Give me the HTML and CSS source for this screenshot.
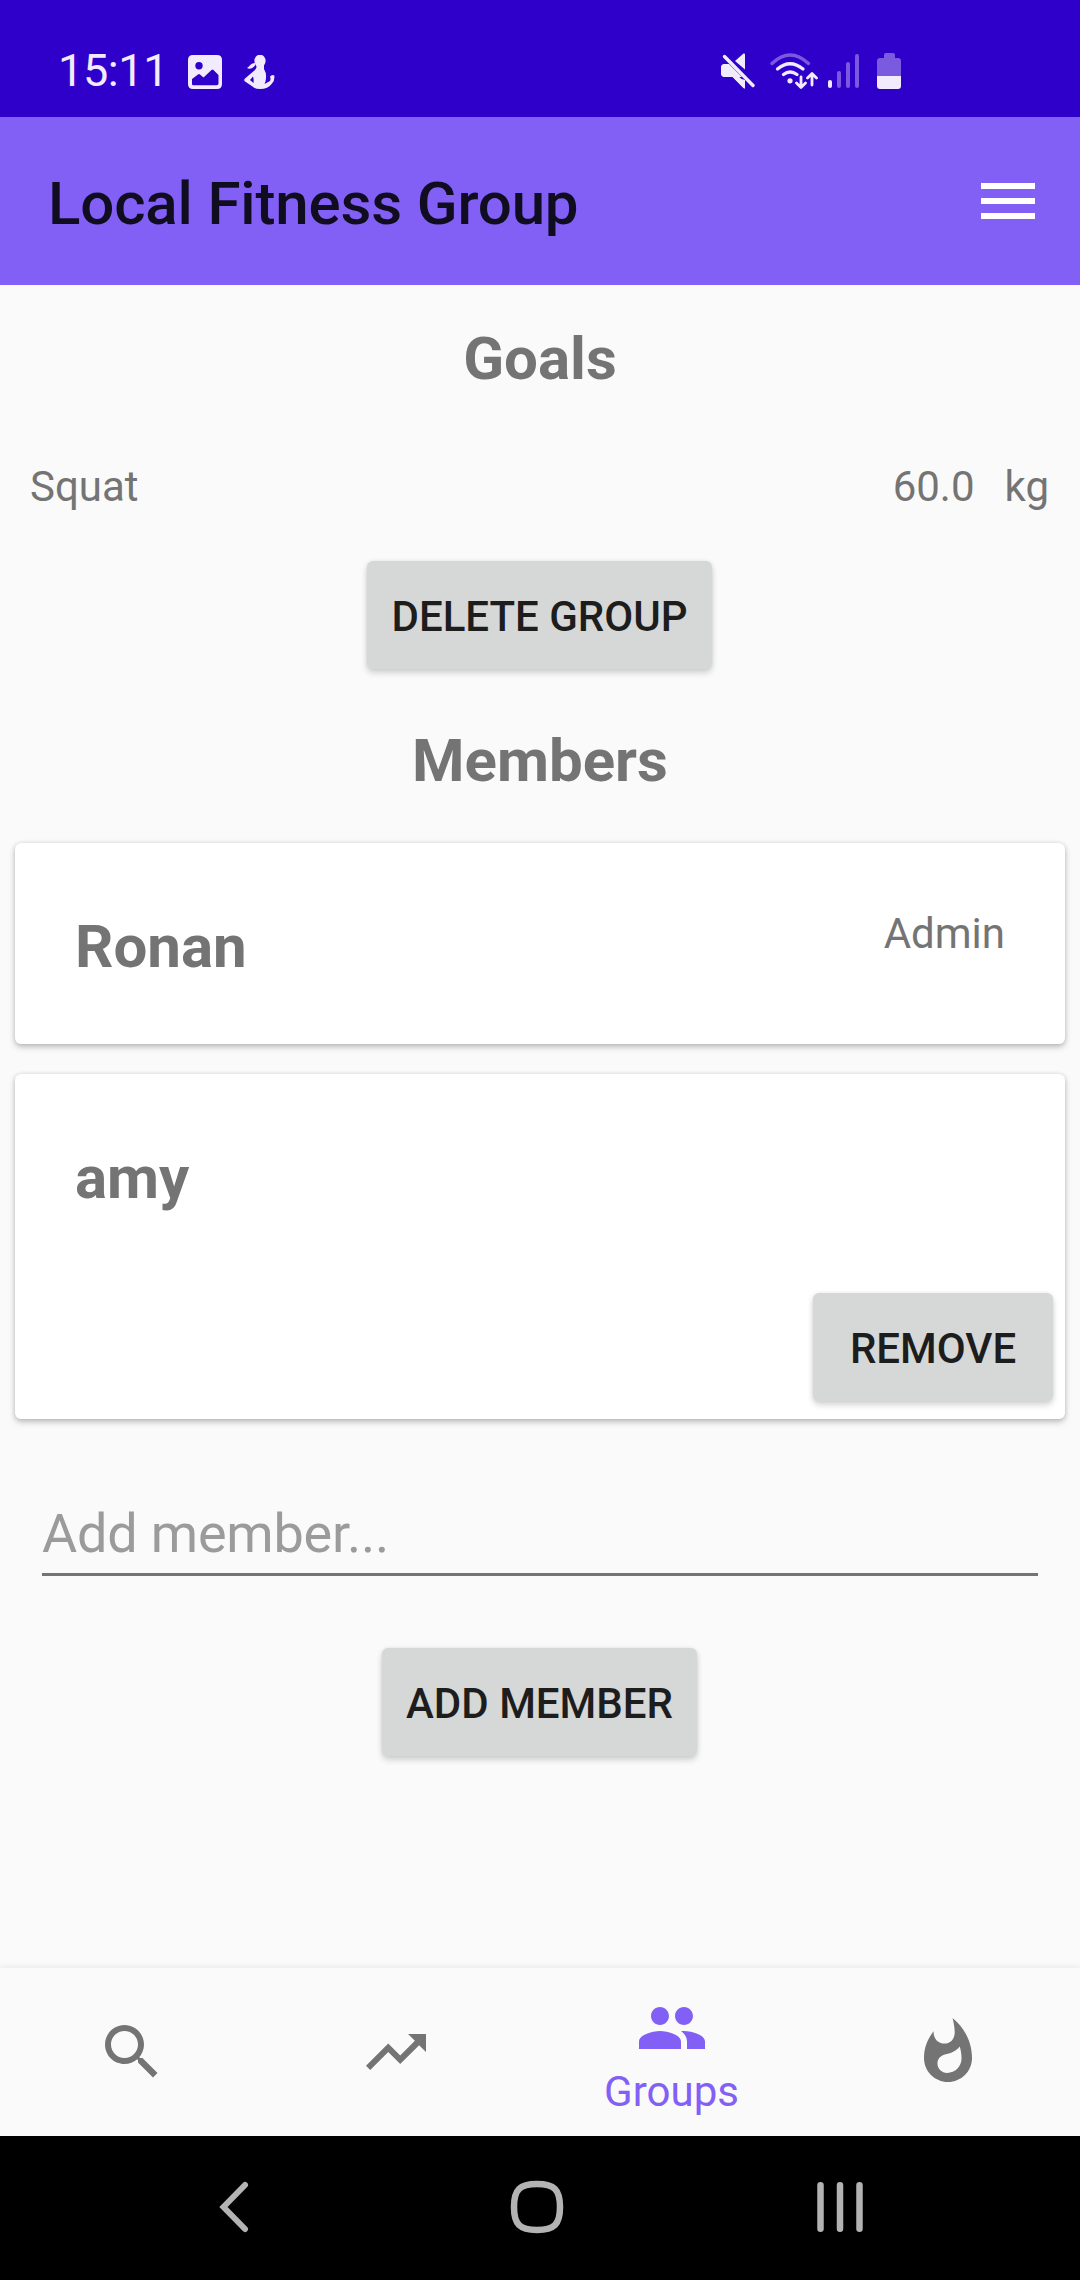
FILE: index.html
```html
<!DOCTYPE html>
<html lang="en">
<head>
<meta charset="utf-8">
<title>Local Fitness Group</title>
<link rel="stylesheet" href="styles.css">
</head>
<body>
<div class="screen">
  <div class="status-bar">
    <span class="clock">15:11</span>
    <svg class="icon-picture" viewBox="0 0 34 34" width="34" height="34"><path fill="#f1ebfd" fill-rule="evenodd" d="M5 0H29Q34 0 34 5V29Q34 34 29 34H5Q0 34 0 29V5Q0 0 5 0ZM11 7A3.7 3.7 0 1 0 11 14.400A3.700 3.700 0 1 0 11 7ZM4 24V29Q4 30.300 5.300 30.300H28.700Q30.500 30.300 30.500 28.500V20L25.500 15Q24.500 14.200 23.500 15L15.500 22.500L12 19.500Q11 18.700 10 19.500Z"/></svg>
    <svg class="icon-person" viewBox="0 0 31 34" width="31" height="34"><g fill="#f1ebfd"><ellipse cx="16" cy="6" rx="5.600" ry="6.300"/><path d="M11 8C7 8 6 11 3 13C6 15 9 13 11.500 10Z"/><path fill-rule="evenodd" d="M12.500 9H20V14Q22.500 18 22 23Q22 26 20.500 29L26 26Q27 24 26 21.500Q28 19 30.300 20.500Q31 25 28 28.500Q24 34 16 34Q11 34 8.500 31.500L.7 26.200Q-.3 25 .7 23.700L11 15Q13 14 12.500 9ZM9 21.500L6 25L9.500 28Q10 24 9 21.500Z"/></g></svg>
    <div class="status-right">
      <svg class="icon-mute" viewBox="0 0 36 36" width="36" height="36"><path fill="#f1ebfd" d="M1 15Q1 11 5 11H9L25 27V34.500Q25 36 23.500 35L12.500 24H5Q1 24 1 20ZM15 8L23.500 .5Q25 0 25 1.500V16.500Z"/><path d="M4.500 3.500L33 33" fill="none" stroke="#3000cb" stroke-width="7"/><path fill="#f1ebfd" d="M1 15Q1 11 5 11H9L22 24H5Q1 24 1 20ZM12 23L25 27V34.500Q25 36 23.500 35Z"/><path d="M4.500 3.500L33 32.500" fill="none" stroke="#f1ebfd" stroke-width="3.400" stroke-linecap="round"/></svg>
      <svg class="icon-wifi" viewBox="0 0 48 36" width="48" height="36"><g fill="none" stroke="#f1ebfd" stroke-width="3.300" stroke-linecap="round" stroke-linejoin="round"><path stroke="#7959de" d="M2 10.500Q20 -6.500 38.500 10.500"/><path d="M7.500 16Q20 5.500 33 16"/><path d="M13.500 21.500Q20 16.500 27 21.500"/><path stroke-width="2.800" d="M31 24V34M26.500 30L31 34.500L35.500 30M42 32V21M37.500 25L42 20.500L46.500 25"/></g><circle cx="20" cy="27.800" r="2.600" fill="#f1ebfd"/></svg>
      <svg class="icon-signal" viewBox="0 0 32 35" width="32" height="35"><g stroke-width="4" stroke-linecap="round" fill="none"><path stroke="#f1ebfd" d="M2 28V32"/><path stroke="#7959de" d="M11 19V32M20 10V32M29 2V32"/></g></svg>
      <svg class="icon-battery" viewBox="0 0 24 36" width="24" height="36"><path fill="#7a5bdf" d="M7 2Q7 0 9 0H16Q18 0 18 2V5H21Q24 5 24 8V23H0V8Q0 5 3 5H7Z"/><path fill="#f1ebfd" d="M0 23H24V33Q24 36 21 36H3Q0 36 0 33Z"/></svg>
    </div>
  </div>

  <header class="app-bar">
    <h1 class="app-title">Local Fitness Group</h1>
    <svg class="menu-icon" viewBox="0 0 24 24" width="72" height="72"><path fill="#fff" d="M3 18h18v-2H3v2zm0-5h18v-2H3v2zm0-7v2h18V6H3z"/></svg>
  </header>

  <main class="content">
    <h2 class="heading">Goals</h2>
    <div class="goal-row">
      <span class="goal-name">Squat</span>
      <span class="goal-value">60.0</span>
      <span class="goal-unit">kg</span>
    </div>
    <button class="button button-delete">DELETE GROUP</button>
    <h2 class="heading heading-members">Members</h2>
    <div class="card">
      <span class="member-name">Ronan</span>
      <span class="member-role">Admin</span>
    </div>
    <div class="card card-removable">
      <span class="member-name">amy</span>
      <button class="button button-remove">REMOVE</button>
    </div>
    <input class="member-input" type="text" placeholder="Add member...">
    <button class="button button-add">ADD MEMBER</button>
  </main>

  <nav class="tabs">
    <a class="tab"><svg viewBox="0 0 24 24" width="72" height="72"><path fill="currentColor" d="M15.500 14h-.79l-.28-.27C15.410 12.590 16 11.110 16 9.500 16 5.910 13.090 3 9.500 3S3 5.910 3 9.500 5.910 16 9.500 16c1.610 0 3.090-.59 4.230-1.570l.27.28v.79l5 4.990L20.490 19l-4.990-5zm-6 0C7.010 14 5 11.990 5 9.500S7.010 5 9.500 5 14 7.010 14 9.500 11.990 14 9.500 14z"/></svg></a>
    <a class="tab"><svg viewBox="0 0 24 24" width="72" height="72"><path fill="currentColor" d="M16 6l2.290 2.290-4.880 4.880-4-4L2 16.590 3.410 18l6-6 4 4 6.300-6.290L22 12V6z"/></svg></a>
    <a class="tab tab-active"><svg viewBox="0 0 24 24" width="72" height="72"><path fill="currentColor" d="M16 11c1.660 0 2.990-1.340 2.990-3S17.660 5 16 5c-1.660 0-3 1.340-3 3s1.340 3 3 3zm-8 0c1.660 0 2.990-1.340 2.990-3S9.660 5 8 5C6.340 5 5 6.340 5 8s1.340 3 3 3zm0 2c-2.330 0-7 1.170-7 3.500V19h14v-2.500c0-2.330-4.670-3.500-7-3.500zm8 0c-.29 0-.62.020-.97.050 1.160.84 1.970 1.970 1.970 3.450V19h6v-2.500c0-2.330-4.670-3.500-7-3.500z"/></svg><span class="tab-label">Groups</span></a>
    <a class="tab"><svg viewBox="0 0 24 24" width="72" height="72"><path fill="currentColor" d="M13.500.67s.74 2.650.74 4.800c0 2.060-1.350 3.730-3.410 3.730-2.070 0-3.630-1.670-3.630-3.730l.03-.36C5.210 7.510 4 10.620 4 14c0 4.420 3.580 8 8 8s8-3.580 8-8C20 8.610 17.410 3.800 13.500.67zM11.710 19c-1.780 0-3.220-1.400-3.220-3.140 0-1.620 1.050-2.760 2.810-3.120 1.770-.36 3.600-1.210 4.620-2.580.39 1.290.59 2.650.59 4.040 0 2.650-2.150 4.800-4.800 4.800z"/></svg></a>
  </nav>

  <div class="system-nav">
    <svg class="nav-back" viewBox="0 0 30 52" width="30" height="52"><path d="M26 4L4.500 26L26 48" fill="none" stroke="#b3b3b3" stroke-width="6" stroke-linecap="round"/></svg>
    <svg class="nav-home" viewBox="0 0 54 54" width="54" height="54"><path d="M27 4Q40 4 45 9T50 27T45 45T27 50T9 45T4 27T9 9T27 4Z" fill="none" stroke="#b3b3b3" stroke-width="6.500"/></svg>
    <svg class="nav-recents" viewBox="0 0 46 50" width="46" height="50"><path d="M3.500 3.300V46.700M23 3.300V46.700M42.500 3.300V46.700" stroke="#b3b3b3" stroke-width="6.500" stroke-linecap="round"/></svg>
  </div>
</div>
</body>
</html>
```

FILE: styles.css
```css
* {
  box-sizing: border-box;
}

body {
  margin: 0;
  background: #fafafa;
  font-family: Roboto, "Liberation Sans", sans-serif;
  color: #747474;
}

svg {
  display: block;
  flex: none;
}

.screen {
  display: flex;
  flex-direction: column;
  width: 1080px;
  height: 2280px;
  overflow: hidden;
}

.status-bar {
  display: flex;
  align-items: flex-start;
  height: 117px;
  padding: 53px 179px 0 58px;
  background: #3000cb;
}

.clock {
  width: 130px;
  margin-top: -10px;
  font-size: 45px;
  line-height: 55px;
  letter-spacing: -0.4px;
  color: #f1ebfd;
}

.icon-picture {
  margin-top: 2px;
}

.icon-person {
  margin: 2px 0 0 22px;
}

.status-right {
  display: flex;
  align-items: flex-start;
  margin-left: auto;
}

.icon-wifi {
  margin-left: 14px;
}

.icon-signal {
  margin: 1px 0 0 10px;
}

.icon-battery {
  margin-left: 17px;
}

.app-bar {
  display: flex;
  align-items: center;
  justify-content: space-between;
  height: 168px;
  padding: 0 36px 0 48px;
  background: #8360f5;
}

.app-title {
  margin: 5px 0 0;
  font-size: 60px;
  font-weight: 500;
  line-height: 72px;
  letter-spacing: -0.15px;
  color: #110d20;
}

.content {
  display: flex;
  flex: 1;
  flex-direction: column;
  padding: 38px 15px 0;
}

.heading {
  margin: 0;
  font-size: 60px;
  font-weight: 700;
  line-height: 71px;
  text-align: center;
}

.goal-row {
  display: flex;
  gap: 30px;
  margin-top: 68px;
  padding: 0 16px 0 15px;
  font-size: 42px;
  line-height: 49px;
}

.goal-name {
  flex: 1;
}

.button {
  height: 108px;
  padding: 3px 0 0;
  border: 0;
  border-radius: 6px;
  background: #d6d8d7;
  box-shadow: 0 4px 6px rgba(0, 0, 0, 0.16), 0 0 4px rgba(0, 0, 0, 0.08);
  font: 500 42px/105px Roboto, "Liberation Sans", sans-serif;
  color: #1d1d1d;
}

.button-delete {
  align-self: center;
  width: 345px;
  margin: 50px 1px 0 0;
}

.heading-members {
  margin-top: 56px;
}

.card {
  display: flex;
  justify-content: space-between;
  height: 201px;
  margin-top: 47px;
  padding: 68px 60px 0;
  border-radius: 6px;
  background: #fff;
  box-shadow: 0 3px 6px rgba(0, 0, 0, 0.24), 0 0 4px rgba(0, 0, 0, 0.1);
}

.card-removable {
  height: 345px;
  margin-top: 30px;
  padding: 68px 12px 18px 60px;
}

.member-name {
  font-size: 60px;
  font-weight: 700;
  line-height: 71px;
}

.member-role {
  margin-top: -2px;
  font-size: 42px;
  line-height: 49px;
}

.button-remove {
  align-self: flex-end;
  width: 240px;
}

.member-input {
  height: 90px;
  margin: 67px 27px 0;
  padding: 8px 0 0;
  border: 0;
  border-bottom: 3px solid #747474;
  outline: 0;
  background: none;
  font: 400 54px/64px Roboto, "Liberation Sans", sans-serif;
  letter-spacing: -0.2px;
}

.member-input::placeholder {
  color: #9b9b9b;
  opacity: 1;
}

.button-add {
  align-self: center;
  width: 315px;
  margin: 72px 1px 0 0;
}

.tabs {
  display: grid;
  grid-template-columns: 264px 264px 288px 264px;
  height: 168px;
  box-shadow: 0 -2px 6px rgba(0, 0, 0, 0.06);
}

.tab {
  display: flex;
  flex-direction: column;
  align-items: center;
  padding-top: 48px;
}

.tab-active {
  padding-top: 24px;
  color: #8360f5;
}

.tab-label {
  margin: 3px 1px 0 0;
  font-size: 42px;
  line-height: 49px;
}

.system-nav {
  display: flex;
  align-items: center;
  height: 144px;
  padding: 0 217px 2px 219px;
  background: #000;
}

.nav-home {
  margin-left: 261px;
}

.nav-recents {
  margin-left: 253px;
}
```
